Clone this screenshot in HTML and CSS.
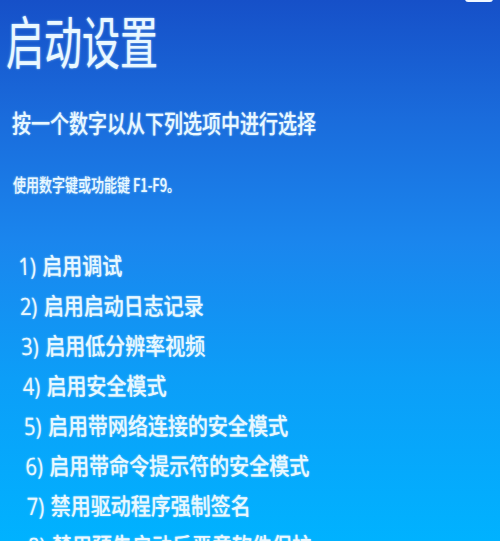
FILE: index.html
```html
<!DOCTYPE html>
<html lang="zh-CN">
<head>
<meta charset="utf-8">
<title>启动设置</title>
<link rel="stylesheet" href="styles.css">
</head>
<body>
<div class="screen">
  <div class="notch"></div>
  <h1 class="title"><span>启动设置</span></h1>
  <p class="subtitle"><span>按一个数字以从下列选项中进行选择</span></p>
  <p class="hint"><span>使用数字键或功能键 F1-F9。</span></p>
  <ol class="options">
    <li><span><b>1)</b> 启用调试</span></li>
    <li><span><b>2)</b> 启用启动日志记录</span></li>
    <li><span><b>3)</b> 启用低分辨率视频</span></li>
    <li><span><b>4)</b> 启用安全模式</span></li>
    <li><span><b>5)</b> 启用带网络连接的安全模式</span></li>
    <li><span><b>6)</b> 启用带命令提示符的安全模式</span></li>
    <li><span><b>7)</b> 禁用驱动程序强制签名</span></li>
    <li><span><b>8)</b> 禁用预先启动反恶意软件保护</span></li>
    <li><span><b>9)</b> 禁用失败后自动重新启动</span></li>
  </ol>
</div>
</body>
</html>
```
FILE: styles.css
```css
html, body {
  margin: 0;
  padding: 0;
}
body {
  width: 500px;
  height: 541px;
  overflow: hidden;
  font-family: "Noto Sans CJK SC", "Noto Sans", sans-serif;
  color: #eaf8ff;
}
.screen {
  position: relative;
  width: 500px;
  height: 541px;
  overflow: hidden;
  background: linear-gradient(180deg, #1650c8 0%, #1a6cdc 22%, #1a86ee 45%, #0c9ef8 70%, #00b2ff 100%);
  text-shadow: 0 0 2px rgba(190, 235, 255, 0.6), 0 0 1px rgba(220, 245, 255, 0.5);
}
.notch {
  position: absolute;
  top: -4px;
  left: 465px;
  width: 28px;
  height: 6px;
  border-radius: 3px;
  background: #f2f8ff;
}
.title, .subtitle, .hint, .options li {
  margin: 0;
  white-space: nowrap;
}
.title span, .subtitle span, .hint span, .options li span {
  display: inline-block;
  transform-origin: 0 0;
}
.title {
  padding: 11px 0 0 6px;
  height: 99px;
  font-size: 38px;
  line-height: 38px;
  font-weight: 400;
}
.title span {
  transform: scaleY(1.5);
}
.subtitle {
  padding-left: 12px;
  height: 65px;
  font-size: 19px;
  line-height: 19px;
  font-weight: 500;
}
.subtitle span {
  transform: scaleY(1.3);
}
.hint {
  padding-left: 13px;
  height: 78px;
  font-size: 13px;
  line-height: 13px;
  font-weight: 500;
}
.hint span {
  transform: scaleY(1.4);
}
.options {
  list-style: none;
  margin: 0;
  padding: 0 0 0 18px;
  transform: skewX(2deg);
  transform-origin: 0 0;
}
.options li {
  height: 40px;
  font-size: 20px;
  line-height: 20px;
  font-weight: 500;
}
.options li span {
  transform: scaleY(1.2);
}
.options b {
  font-family: "Open Sans", "Noto Sans", sans-serif;
  font-weight: 500;
  margin-right: 2px;
}
```
